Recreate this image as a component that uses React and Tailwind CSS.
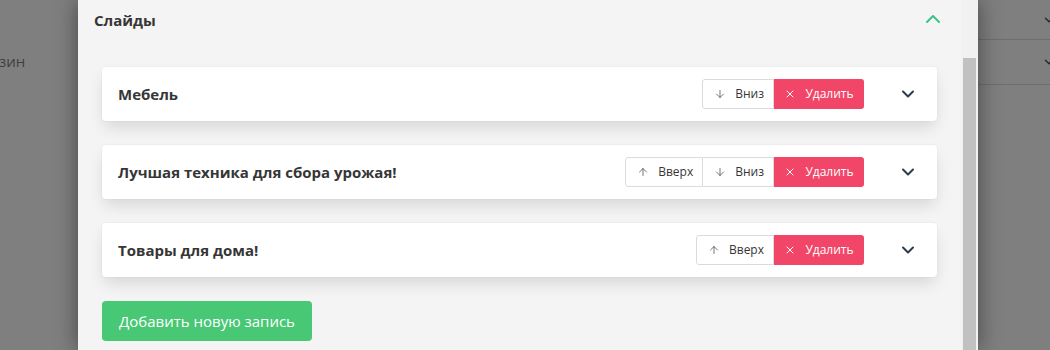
import { ArrowDown, ArrowUp, X, ChevronDown, ChevronUp } from 'lucide-react';

const slides = [
  { title: 'Мебель', up: false, down: true },
  { title: 'Лучшая техника для сбора урожая!', up: true, down: true },
  { title: 'Товары для дома!', up: true, down: false },
];

function SlideCard({ slide }) {
  return (
    <div className="flex h-[54px] items-center rounded-[4px] bg-white pl-4 pr-[19px] shadow-[0_8px_16px_-2px_rgba(10,10,10,0.12),0_0_0_1px_rgba(10,10,10,0.02)]">
      <span className="flex-1 text-[15px] font-bold text-[#363636]">{slide.title}</span>
      <div className="flex h-[30px] text-[12px]">
        {slide.up && (
          <button className="flex items-center gap-[9px] rounded-l-[3px] border border-[#dbdbdb] bg-white pl-[11px] pr-[9px] text-[#363636]">
            <ArrowUp size={12} strokeWidth={1.5} className="text-[#4a4a4a]" /> Вверх
          </button>
        )}
        {slide.down && (
          <button
            className={
              slide.up
                ? 'flex items-center gap-[9px] border border-l-0 border-[#dbdbdb] bg-white pl-[11px] pr-[9px] text-[#363636]'
                : 'flex items-center gap-[9px] rounded-l-[3px] border border-[#dbdbdb] bg-white pl-[11px] pr-[9px] text-[#363636]'
            }
          >
            <ArrowDown size={12} strokeWidth={1.5} className="text-[#4a4a4a]" /> Вниз
          </button>
        )}
        <button className="flex w-[90px] items-center justify-center gap-[9px] rounded-r-[3px] bg-[#f14668] text-white">
          <X size={12} strokeWidth={2} /> Удалить
        </button>
      </div>
      <ChevronDown size={20} strokeWidth={2.4} className="ml-[34px] text-[#2e3a4d]" />
    </div>
  );
}

export default function App() {
  return (
    <div className="flex h-[350px] w-[1050px] overflow-hidden bg-[#7f7f7f] font-['Open_Sans',sans-serif]">
      {/* page behind overlay, left */}
      <div className="w-[78px] shrink-0 pt-[49px]">
        <span className="ml-[-1px] text-[15px] text-[#3f3f3f]">зин</span>
      </div>

      {/* modal */}
      <div className="relative z-10 flex w-[900px] shrink-0 bg-[#f4f4f4] shadow-[0_0_22px_rgba(0,0,0,0.45)]">
        <div className="flex-1">
          <div className="flex h-[40px] items-center pl-4 pr-[16px]">
            <span className="flex-1 text-[15px] font-bold text-[#363636]">Слайды</span>
            <ChevronUp size={24} strokeWidth={2} className="mt-[-2px] text-[#3cc28a]" />
          </div>
          <div className="flex flex-col gap-6 px-6 pt-[27px]">
            {slides.map((s) => (
              <SlideCard key={s.title} slide={s} />
            ))}
            <div>
              <button className="h-10 w-[210px] rounded-[4px] bg-[#48c774] text-[15px] text-white">
                Добавить новую запись
              </button>
            </div>
          </div>
        </div>
        {/* scrollbar */}
        <div className="flex w-[17px] flex-col bg-[#f1f1f1] pl-[2px] pr-[2px] pt-[58px]">
          <div className="flex-1 bg-[#c1c1c1]" />
        </div>
      </div>

      {/* page behind overlay, right */}
      <div className="flex-1">
        <div className="flex h-[40px] items-center justify-end border-b border-[#6e6e6e]">
          <ChevronDown size={14} strokeWidth={2.5} className="mr-[-6px] text-[#2a2a2a]" />
        </div>
        <div className="flex h-[45px] items-center justify-end border-b border-[#6e6e6e]">
          <ChevronDown size={14} strokeWidth={2.5} className="mr-[-6px] text-[#2a2a2a]" />
        </div>
      </div>
    </div>
  );
}
